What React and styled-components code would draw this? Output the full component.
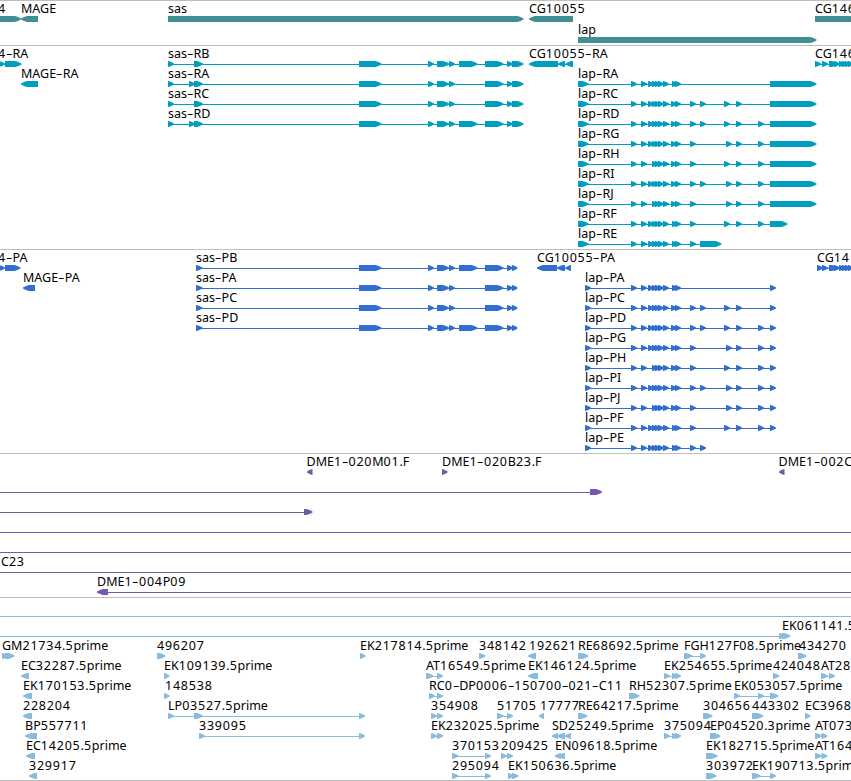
import React from 'react';
import styled, { createGlobalStyle } from 'styled-components';

const GlobalStyle = createGlobalStyle`
body {
    margin: 0;
    background: #ffffff;
    overflow: hidden;
}
`;

const Browser = styled.main`
display: flex;
flex-direction: column;
width: 851px;
height: 781px;
overflow: hidden;
box-sizing: border-box;
border-bottom: 1px solid #bebebe;
font-family: 'Noto Sans', 'Open Sans', sans-serif;
font-size: 12.5px;
color: #000000;
`;

const Track = styled.section`
display: flex;
flex-direction: column;
flex: none;
box-sizing: border-box;
height: ${props => props.$height}px;
padding-top: 1px;
border-top: 1px solid #bebebe;
color: ${props => props.$color};
`;

const Row = styled.div`
position: relative;
flex: none;
height: ${props => props.$height}px;
`;

// a feature sits at its own coordinate on the sequence
const FeatureBox = styled.div`
position: absolute;
left: ${props => props.$start}px;
display: flex;
flex-direction: column;
align-items: flex-start;
`;

const Label = styled.span`
height: 14px;
line-height: 13px;
margin-left: ${props => props.$shift}px;
white-space: pre;
color: #000000;
`;

const Digits = styled.span`
letter-spacing: 0.78px;
`;

const Dash = styled.span`
display: inline-block;
width: 6.6px;
transform: scaleX(1.6);
transform-origin: left center;
`;

const Glyph = styled.svg`
flex: none;
overflow: visible;
fill: currentColor;
`;

// name, exons, options
const f = (name, exons, opts) => ({ name, exons, ...opts });
const left = { reverse: true };

const genes = [
    [
        f('4', [[-20, 21]], { labelX: -2 }),
        f('MAGE', [[21, 38]], left),
        f('sas', [[168, 523.5]]),
        f('CG10055', [[529, 573]], left),
        f('CG146', [[815, 856]]),
    ],
    [f('lap', [[578, 816.5]])],
];

const small = (list) => list.map((x) => [x, x + 6]);

const sas = (name, start, opts) => f(name, [
    ...start,
    [359, 381.5], [428, 434], [437, 449], [449, 455],
    ...(opts.long ? [[459, 477.5]] : []),
    [485, 503.5], [507, 513], [512, opts.end],
]);

const lapCore = [631, 641, 648, 652, 655, 658, 663, 672, 675];
const lapCore2 = [631, 641, 648, 652, 655, 658, 663, 671, 675];
const lapShort = [631, 641, 652, 655, 658, 663, 671, 675];

// isoform letter, inner exons, end of the last transcript exon
const isoforms = [
    ['A', lapCore, [770, 816.5]],
    ['C', [...lapCore2, 690, 700, 724, 736], [770, 816.5]],
    ['D', [...lapCore2, 690, 700, 724, 736, 758], [770, 816.5]],
    ['G', [...lapCore2, 690, 726, 736, 758], [770, 816.5]],
    ['H', [...lapShort, 690, 724, 736, 758], [770, 816.5]],
    ['I', [...lapCore2, 690, 700, 726, 736, 758], [770, 816.5]],
    ['J', [...lapShort, 690, 726, 736, 758], [770, 816.5]],
    ['F', [...lapCore, 690, 724, 736, 758], [770, 787.5]],
    ['E', [...lapCore, 690], [700, 721.5]],
];

const lapR = isoforms.map(([letter, inner, last]) =>
    f('lap-R' + letter, [[578, 588.5], ...small(inner), last]));

const lapP = isoforms.map(([letter, inner, last]) =>
    f('lap-P' + letter, [[585, 591], ...small(inner), [last[0], last[0] + 6]]));

const transcripts = [
    [
        f('4-RA', [[-1, 5], [5, 21.5]], { labelX: -2 }),
        sas('sas-RB', [[168, 174], [194, 203]], { long: true, end: 523.5 }),
        f('CG10055-RA', [[529, 558], [558, 565], [565.5, 573]], left),
        f('CG146', [[815, 821], [822, 828], [829, 838], [834, 840], [839, 845], [842, 848], [845, 851], [848, 854]]),
    ],
    [
        f('MAGE-RA', [[21, 38]], left),
        sas('sas-RA', [[168, 174], [189, 195], [194, 203]], { end: 523.5 }),
        lapR[0],
    ],
    [sas('sas-RC', [[168, 174], [194, 203]], { end: 523.5 }), lapR[1]],
    [sas('sas-RD', [[168, 174], [189, 195], [194, 203]], { long: true, end: 523.5 }), lapR[2]],
    ...lapR.slice(3).map((item) => [item]),
];

const proteins = [
    [
        f('4-PA', [[-1, 5], [5, 20.5]], { labelX: -2 }),
        sas('sas-PB', [[196, 202.5]], { long: true, end: 517.5 }),
        f('CG10055-PA', [[537, 557], [557, 565], [565.5, 571]], left),
        f('CG14', [[817, 823], [822, 828], [829, 838], [834, 840], [839, 845], [842, 848], [845, 851], [848, 854]]),
    ],
    [f('MAGE-PA', [[23, 35]], left), sas('sas-PA', [[196, 202.5]], { end: 517.5 }), lapP[0]],
    [sas('sas-PC', [[196, 202.5]], { end: 517.5 }), lapP[1]],
    [sas('sas-PD', [[196, 202.5]], { long: true, end: 517.5 }), lapP[2]],
    ...lapP.slice(3).map((item) => [item]),
];

const bacs = [
    [
        f('DME1-020M01.F', [[306.5, 312]], left),
        f('DME1-020B23.F', [[442, 447.5]]),
        f('DME1-002C', [[778.5, 784]], left),
    ],
    [f('', [[590, 602]], { from: 0 })],
    [f('', [[304, 312.5]], { from: 0 })],
    [f('', [], { from: 0, to: 852 })],
    [f('', [], { from: 0, to: 852 })],
    [f('C23', [], { from: 0, to: 852, labelX: 1 })],
    [f('DME1-004P09', [[97, 108]], { reverse: true, to: 852 })],
];

const ests = [
    [f('', [], { from: 0, to: 852 })],
    [
        f('', [[779, 785]], { from: 0 }),
        f('EK061141.5', [[782, 790.5]]),
    ],
    [
        f('GM21734.5prime', [[2, 8], [5, 14.5]]),
        f('496207', [[157, 165.5]]),
        f('EK217814.5prime', [[360, 365.5]]),
        f('348142', [[479, 485.5]]),
        f('192621', [[528, 536]], { reverse: true, labelX: 529 }),
        f('RE68692.5prime', [[578, 588.5]]),
        f('FGH127F08.5prime', [[684, 692.5], [700, 706]]),
        f('434270', [[798, 806.5]], { labelX: 799 }),
    ],
    [
        f('EC32287.5prime', [[21, 29]], left),
        f('EK109139.5prime', [[164, 169.5]]),
        f('AT16549.5prime', [[426, 433.5], [437, 443]]),
        f('EK146124.5prime', [[528, 538]], left),
        f('EK254655.5prime', [[664, 670], [672, 678], [675, 681]]),
        f('424048', [[773, 779.5]]),
        f('AT28', [[821, 828], [829, 835]]),
    ],
    [
        f('EK170153.5prime', [[23, 32]], left),
        f('148538', [[164, 169.5]], { labelX: 165 }),
        f('RC0-DP0006-150700-021-C11', [[429, 435], [437, 443]]),
        f('RH52307.5prime', [[629, 639.5]]),
        f('EK053057.5prime', [[734, 740], [758, 764], [770, 778.5]]),
    ],
    [
        f('228204', [[23, 32]], left),
        f('LP03527.5prime', [[168, 174], [194, 203], [359, 365]]),
        f('354908', [[431, 437], [437, 443]]),
        f('51705', [[497, 503.5], [507, 513]]),
        f('17777', [[539, 544]], { reverse: true, labelX: 540 }),
        f('RE64217.5prime', [[578, 587.5]]),
        f('304656', [[703, 712.5]]),
        f('443302', [[752, 763.5]]),
        f('EC3968', [[805, 810.5]]),
    ],
    [
        f('BP557711', [[25, 37]], left),
        f('339095', [[199, 205], [359, 365]]),
        f('EK232025.5prime', [[431, 437], [437, 443]]),
        f('SD25249.5prime', [[552, 558], [557, 565], [565, 571]], left),
        f('375094', [[664, 670], [672, 678], [675, 681]]),
        f('EP04520.3prime', [[710, 720.5]]),
        f('AT073', [[815, 822], [821.5, 827.5]]),
    ],
    [
        f('EC14205.5prime', [[26, 35]], left),
        f('370153', [[452, 458.5], [485, 491]]),
        f('209425', [[501, 507], [507, 513]]),
        f('EN09618.5prime', [[555, 561], [558, 565]], left),
        f('EK182715.5prime', [[706, 717.5]]),
        f('AT164', [[815, 822], [821.5, 827.5]]),
    ],
    [
        f('329917', [[29, 37]], left),
        f('295094', [[452, 458.5], [485, 491]]),
        f('EK150636.5prime', [[508, 514], [512, 518.5]]),
        f('303972', [[706, 716.5]]),
        f('EK190713.5prim', [[752, 760.5], [770, 776]]),
    ],
];

const tracks = [
    { id: 'genes', color: '#3f8f94', height: 45, rowHeight: 21, rows: genes },
    { id: 'transcripts', color: '#009fc0', height: 204, rowHeight: 20, rows: transcripts },
    { id: 'proteins', color: '#306fd0', height: 204, rowHeight: 20, rows: proteins },
    { id: 'bacs', color: '#7658aa', height: 144, rowHeight: 20, rows: bacs },
    { id: 'ests', color: '#88bbdd', height: 183, rowHeight: 20, rows: ests },
];

// numbers are set wider than letters
const Name = ({ text }) => text.split(/(\d+|-)/).filter(Boolean).map((part, index) => {
    if (part === '-') {
        return <Dash key={index}>-</Dash>;
    }
    if (/\d/.test(part)) {
        return <Digits key={index}>{part}</Digits>;
    }
    return part;
});

// slightly bulged head, so that the short exons stay readable
const arrow = (start, end, reverse) => {
    const tip = Math.min(6, end - start - 0.5);
    if (reverse) {
        return `${end},0 ${start + tip},0 ${start + tip / 2},1 ${start},2.6 ${start},3.4 ${start + tip / 2},5 ${start + tip},6 ${end},6`;
    }
    return `${start},0 ${end - tip},0 ${end - tip / 2},1 ${end},2.6 ${end},3.4 ${end - tip / 2},5 ${end - tip},6 ${start},6`;
};

const Feature = ({ item }) => {
    const { name, exons, reverse, labelX } = item;
    const start = item.from !== undefined ? item.from : exons[0][0];
    const end = item.to !== undefined ? item.to : exons[exons.length - 1][1];
    const width = end - start;

    return (
        <FeatureBox $start={start}>
            <Label $shift={labelX !== undefined ? labelX - start : 0}>
                <Name text={name}/>
            </Label>
            <Glyph width={width} height="6" viewBox={`${start} 0 ${width} 6`}>
                {(exons.length !== 1 || width > exons[0][1] - exons[0][0]) && (
                    <rect x={start} y="3" width={width - (exons.length ? 1 : 0)} height="1"/>
                )}
                {exons.map(([a, b], index) => (
                    <polygon key={index} points={arrow(a, b, reverse)}/>
                ))}
            </Glyph>
        </FeatureBox>
    );
};

class App extends React.Component {
    render() {
        return (
            <Browser>
                <GlobalStyle/>
                {tracks.map((track) => (
                    <Track key={track.id} $height={track.height} $color={track.color}>
                        {track.rows.map((row, index) => (
                            <Row key={index} $height={track.rowHeight}>
                                {row.map((item, i) => <Feature item={item} key={i}/>)}
                            </Row>
                        ))}
                    </Track>
                ))}
            </Browser>
        );
    }
}

export default App;
